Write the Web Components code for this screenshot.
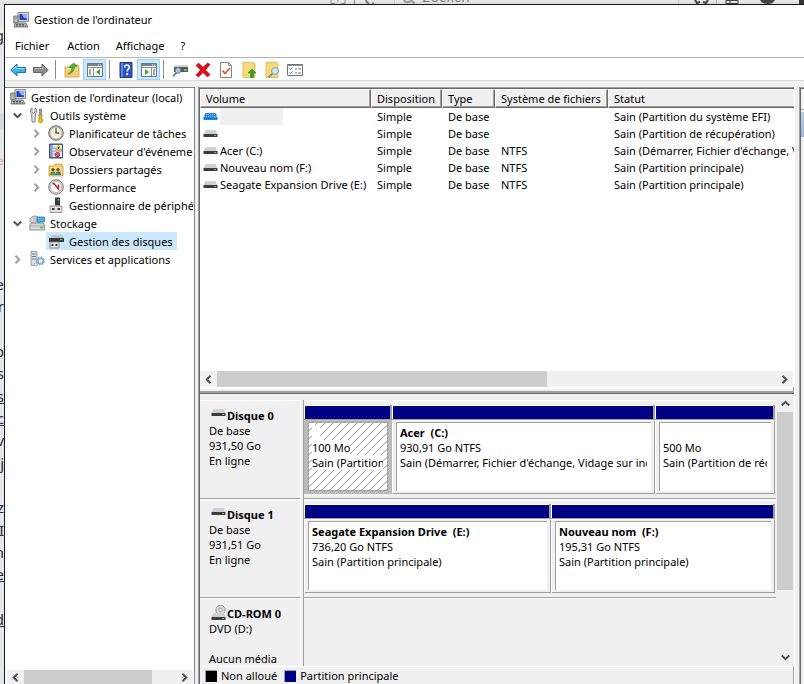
<!DOCTYPE html>
<html lang="fr">
<head>
<meta charset="utf-8">
<title>Gestion de l'ordinateur</title>
<style>
html,body{height:100%;margin:0}
body{font:11px/15px "Noto Sans","Open Sans",sans-serif;color:#000;background:#e6e7ea;overflow:hidden}
</style>
</head>
<body>
<mmc-desktop></mmc-desktop>
<script>
const define = (name, css, html) => {
  const tpl = document.createElement('template');
  customElements.define(name, class extends HTMLElement {
    connectedCallback() {
      if (this.shadowRoot) return;
      const root = this.attachShadow({mode: 'open'});
      tpl.innerHTML = `<style>*{box-sizing:border-box}:host{box-sizing:border-box}button{font:inherit;color:inherit;border:0;background:none;padding:0;margin:0}${css}</style>` +
        (typeof html === 'function' ? html(this) : html);
      root.append(tpl.content.cloneNode(true));
    }
  });
};

const monitor = `<path d="M5 .5h10.500v9H5z" fill="#d9d9d2" stroke="#8d8d88"/><path d="M6.500 2h7.500v6H6.500z" fill="#1f3fc4"/><path d="M9 2h5v4.500C11.500 6.500 9.500 5 9 2z" fill="#8fb4f5"/><path d="M.8 4H5v7H.8z" fill="#b9bdb9" stroke="#777"/><path d="M2 6h2" stroke="#3c3"/><path d="M2 11h11l2 4H1z" fill="#b5b9b9" stroke="#666" stroke-width=".8"/><path d="M3 12.500h9M3 14h10" stroke="#555" stroke-dasharray="2 1"/>`;
const drive = (y) => `<path d="M2.500 ${y}h10l2 4H.5z" fill="#d0d1d4"/><path d="M.5 ${y+4}h14v3H.5z" fill="#3a3d40"/><path d="M11 ${y+5}h2v1h-2z" fill="#3fe04a"/>`;
const folder = `<path d="M1 5h5l1-2h7v2h1v10H1z" fill="#f2cf74" stroke="#c79f3c" stroke-width=".8"/><path d="M2 7h12" stroke="#fbe7ae"/>`;
const panel = (tri, side) => `<path d="M.5 1.500h15v13H.5z" fill="#fff" stroke="#6f757b"/><path d="M1 2h14v2H1z" fill="#7b8187"/><path d="M1 5.500h14M${side ? 10.5 : 6.5} 6v8" stroke="#8b9196"/><path d="M11 3h1M13 3h1" stroke="#fff"/><path d="M${side ? 12 : 2} 8h2M${side ? 12 : 2} 10h2M${side ? 12 : 2} 12h2" stroke="#4f555b"/><path d="${tri}" fill="#3ba42f"/>`;
const icons = {
  computer: monitor,
  back: `<path d="M.7 8 7 2v3.500h8.500v5H7V14z" fill="#3fb0ea" stroke="#1b6fae"/><path d="M2.500 7.500 6 4.300V6.500h8.500" fill="none" stroke="#a3def8"/>`,
  forward: `<path d="M15.300 8 9 2v3.500H.5v5H9V14z" fill="#8d8d8d" stroke="#626262"/><path d="M1.500 6.500H10V4.300" fill="none" stroke="#bdbdbd"/>`,
  up: folder + `<path d="M4 12c2.500-1 4-3.500 4-6.500H5L9.500 1 13 4l-2.500 1C10 9 7.500 12 4 12z" fill="#47b83a" stroke="#27801f" stroke-width=".6"/>`,
  treepane: panel('M13 7v6l-4-3z', false),
  actpane: panel('M4 7v6l4-3z', true),
  help: `<path d="M2 .5h12v15H2z" fill="#2c55c5" stroke="#1d3a8d"/><path d="M3 1h2v14H3z" fill="#5f84e4"/><path d="M6.700 5.500c0-3.400 4.800-3.200 4.600-.4C11.200 7 9.200 7 9.200 9.500" fill="none" stroke="#fff" stroke-width="1.600"/><circle cx="9.200" cy="12.200" r="1.100" fill="#fff"/>`,
  connect: `<path d="M3 3h12l1 2H2z" fill="#cfd2d4"/><path d="M2 5h14v5H2z" fill="#54595e"/><path d="M12 7h3v2h-3z" fill="#35d54a"/><circle cx="6" cy="8.500" r="2.800" fill="#a5c9dc" stroke="#6c7f89"/><path d="M4.300 10.500 1 14.500" stroke="#6c7f89" stroke-width="1.800"/>`,
  remove: `<path d="M1 3.500 3.500 1 8 5.300 12.500 1 15 2.500 10.500 8l4.500 4.500-2.500 2.500L8 10.500 3.500 15 1 13l4.500-5z" fill="#d90f1c" stroke="#9d0710" stroke-width=".6"/>`,
  doccheck: `<path d="M2.500.5h8l3 3v12h-11z" fill="#fff" stroke="#858585"/><path d="M10.500.5v3h3" fill="none" stroke="#858585"/><path d="m4.500 8.500 2.500 3 5-5.500" fill="none" stroke="#e8562a" stroke-width="1.800"/>`,
  folderup: `<path d="M2 .5h11l1 1v14H2z" fill="#f9da78" stroke="#d9b14c" stroke-width=".8"/><path d="m11 7 4 4h-2.500v4.500h-3V11H7z" fill="#2fa52a" stroke="#1c7d1a" stroke-width=".5"/>`,
  foldersearch: `<path d="M2 .5h11l1 1v14H2z" fill="#f9da78" stroke="#d9b14c" stroke-width=".8"/><circle cx="11" cy="9" r="3.400" fill="#cfeaf5" stroke="#7f98a5"/><path d="m8.500 11.500-4 4" stroke="#8b8b83" stroke-width="1.800"/>`,
  list: `<path d="M.5 2.500h15v11H.5z" fill="#fff" stroke="#6f757b"/><path d="M1 3.500h14" stroke="#8b9196"/><path d="m2.500 6.500 1 1 2-2M2.500 10.500l1 1 2-2" fill="none" stroke="#2b8ae0"/><path d="M8 7h2M11 7h3M8 11h2M11 11h3" stroke="#777"/>`,
  tools: `<path d="M3 1v4l1.500 1.500L6 5V1c2 1 2.500 3.500.5 5.500L6 15H3l-.3-8.500C.8 5 1 2 3 1z" fill="#e8e8e8" stroke="#737373" stroke-width=".9"/><path d="M10.500 2h2v5.500h-2z" fill="#9a9a9a" stroke="#666" stroke-width=".6"/><path d="M9.500 8h4l-1 2 1.300 4.500c-.5 1.500-4 1.500-4.500 0L10.500 10z" fill="#f5b81c" stroke="#a8770b" stroke-width=".7"/>`,
  clock: `<circle cx="8" cy="8" r="7.300" fill="#b8b8b5" stroke="#6f6f6f"/><circle cx="8" cy="8" r="5.500" fill="#fdf1d2"/><path d="M8 3v5h3.500" fill="none" stroke="#3e5f96" stroke-width="1.300"/>`,
  events: `<path d="M1.500 1h13v14h-13z" fill="#5273a3" stroke="#384f73"/><path d="M4.500 2H14v12H4.500z" fill="#e9eff8"/><path d="M5 5h3M5 8h9M5 11h3" stroke="#7893c4"/><path d="M2 3h2M2 5h2M2 7h2M2 9h2M2 11h2M2 13h2" stroke="#dfe6f1" stroke-width=".8"/><path d="m10.500 2 3 5h-6z" fill="#f8d32a" stroke="#a98708" stroke-width=".5"/><path d="M10.500 4v2" stroke="#222"/><circle cx="9.500" cy="11.500" r="2.600" fill="#d4213a"/><path d="m8.500 10.500 2 2m0-2-2 2" stroke="#fff" stroke-width=".8"/>`,
  shared: folder + `<circle cx="5" cy="8.500" r="1.600" fill="#704824"/><circle cx="10" cy="8.500" r="1.600" fill="#704824"/><path d="M2 14c0-5 6-5 6 0z" fill="#4d9b68"/><path d="M7.500 14c0-5 5.500-5 5.500 0z" fill="#3d7a9c"/>`,
  perf: `<circle cx="8" cy="8" r="7.300" fill="#ddd" stroke="#777"/><circle cx="8" cy="8" r="5.500" fill="#fff" stroke="#a2a2a2" stroke-width=".7"/><path d="m4.500 5 1.500-.5L10.500 10V5.500" fill="none" stroke="#c91b25" stroke-width="1.500"/>`,
  device: `<path d="M7 .5h5v8H7z" fill="#36393b"/><path d="M9.500 2h1.500v1.500H9.500z" fill="#42dc4a"/><path d="M2 9h12v6.500H2z" fill="#e1e1e1" stroke="#808080" stroke-width=".8"/><path d="M4 11h2.500v2H4zM9.500 11H12v2H9.500z" fill="#333"/>`,
  storage: `<ellipse cx="6" cy="5" rx="5" ry="4" fill="#d2d5d6" stroke="#7d7d7d" stroke-width=".8"/><circle cx="6" cy="5" r="1.200" fill="#fff" stroke="#888" stroke-width=".6"/><path d="M8 2h7.500v5H8z" fill="#45b4e8" stroke="#2a6f9a" stroke-width=".7"/><path d="M2 8h12l1.500 2v5H.8v-5z" fill="#d8d9d9" stroke="#777" stroke-width=".8"/><path d="M1 11h14" stroke="#999" stroke-width=".7"/><path d="M11 12.500h3" stroke="#36c93e" stroke-width="1.500"/>`,
  diskmgmt: `<path d="M4 2h10l2 3H2z" fill="#c0c3c6"/><path d="M1 5h15v4H1z" fill="#36393c"/><path d="M12 6.500h2.500" stroke="#3ce04b" stroke-width="1.300"/><path d="M2 9h9v6H2z" fill="#ececec" stroke="#777" stroke-width=".8"/><path d="M3.500 11h2v2h-2zM7.500 11h2v2h-2z" fill="#333"/>`,
  services: `<path d="M2 .5h6v14H2z" fill="#dfe3e6" stroke="#7f8a92" stroke-width=".8"/><path d="M3 3h4M3 5.500h4M3 8h4" stroke="#6e7a84"/><circle cx="11.500" cy="10" r="2.800" fill="none" stroke="#8fb1cc" stroke-width="2"/><circle cx="11.500" cy="10" r="4" fill="none" stroke="#7b9db9" stroke-dasharray="1.500 1.600"/><circle cx="7" cy="13.500" r="1.700" fill="#dfe9f1" stroke="#7b9db9" stroke-dasharray="1.200 .7"/>`,
  drive: drive(4),
  driveblue: `<path d="M2.500 4h10l2 4v3H.5V8z" fill="#2584dc"/><path d="M3 5.500h10M1 7.500h13" stroke="#8cc6f6" stroke-dasharray="1 1"/><path d="M1 9.500h13" stroke="#1560b4" stroke-dasharray="1 1"/><path d="M11 8.500h2" stroke="#2be07a"/>`,
  cdrom: `<circle cx="9.500" cy="5" r="4.700" fill="#d6d6d6" stroke="#929292" stroke-width=".8"/><circle cx="9.500" cy="5" r="1.600" fill="#fff" stroke="#888" stroke-width=".7"/>` + drive(8)
};

define('mmc-icon', ':host{display:inline-flex;flex:none;width:16px;height:16px}svg{width:100%;height:100%}',
  h => `<svg viewBox="0 0 16 16" aria-hidden="true">${icons[h.getAttribute('name')]}</svg>`);

define('mmc-chevron', ':host{display:inline-flex;flex:none;width:9px;height:9px;color:#505050}:host([dir=right]){transform:rotate(-90deg)}:host([dir=left]){transform:rotate(90deg)}:host([dir=up]){transform:rotate(180deg)}svg{width:100%}',
  '<svg viewBox="0 0 9 9" aria-hidden="true"><path d="m.8 2.500 3.700 3.700 3.700-3.700" fill="none" stroke="currentColor" stroke-width="2"/></svg>');

/* Application visible behind the window */
define('backdrop-top', `:host{display:block;height:4px;overflow:hidden;background:linear-gradient(#ececec,#d9d9d9);color:#777;grid-column:1/-1}
  svg{width:100%;height:4px;flex:none}
  .wrap{display:grid;grid-template-columns:330px 64px 285px minmax(0,1fr);grid-template-rows:4px;align-items:end;height:4px}
  .search{display:flex;align-items:flex-end;height:20px;gap:8px;border:1px solid #c8c8c8;border-width:0 1px;padding-left:8px;font:italic 15px/16px "Open Sans",sans-serif}
  .search svg{width:12px}`,
  `<div class="wrap"><i></i>
  <svg viewBox="0 0 64 4" preserveAspectRatio="xMinYMin"><path d="M1 0v3.500h4M11 3.500h4V0M7 1h2M24.500 0v4" fill="none" stroke="#888"/><path d="M36 0c0 2 2 3 3 4M42 3.500h2" stroke="#777" stroke-width="2" fill="none"/></svg>
  <div class="search"><svg viewBox="0 0 12 4"><path d="M1 0c1 3 6 3 7 0l4 4" fill="none" stroke="#999" stroke-width="2"/></svg><span>Zoeken</span></div>
  <svg viewBox="0 0 125 4" preserveAspectRatio="xMinYMin"><path d="M16 0l2 3 3-1M29 0l-2 3-3-1" fill="none" stroke="#444" stroke-width="2"/><path d="M37.500 0v4" stroke="#aaa"/><path d="M47 0v4M51 0v4M59 0v4M47 3.500h12M47 .5h12" stroke="#444" fill="none"/><path d="M81 0h15c-2 3-4 4-7.500 4S83 3 81 0z" fill="#444"/><path d="M120 0h5v4h-5z" fill="#333"/></svg></div>`);

define('backdrop-left', `:host{display:grid;grid-template-columns:minmax(0,1fr);grid-template-rows:23px 16px 70px 16px 20px 23px 101px minmax(0,357fr) 54fr;width:4px;overflow:hidden;color:#2b2d3c;font-size:15px;line-height:20px;background:#e6e7ea}
  span{display:flex;justify-content:flex-end;white-space:pre;align-items:center;min-width:0}
  .rule{border-bottom:1px solid #bbb;background:#efefef}
  .grey{background:#d6d7da}.red{color:#d9a0a0;font-size:11px}
  .lines{display:grid;grid-template-columns:minmax(0,1fr);grid-auto-rows:minmax(0,1fr)}u{text-decoration-thickness:1px}`,
  `<span></span><span class="rule">g</span><span></span><span class="grey"></span><span></span><span class="red">e</span><span></span><div class="lines">${
    ['ge','er','','o','s','<u>s</u>','<u>c</u>','(v','j','','z','NI','n','<u>e</u>','','<u>d</u>'].map(t => `<span>${t}</span>`).join('')}</div>`);

define('mmc-titlebar', ':host{display:flex;align-items:center;gap:5px;height:29px;padding-left:8px}h1{font:inherit;margin:0}', '<mmc-icon name="computer"></mmc-icon><h1><slot></slot></h1>');

define('mmc-menubar', ':host{display:flex;align-items:center;height:24px;padding-left:2px;border-bottom:1px solid #b4b4b4}button{padding:0 8px}button:nth-child(2){padding-right:10px}',
  h => h.getAttribute('items').split(',').map(t => `<button>${t}</button>`).join(''));

define('mmc-toolbar', `:host{display:flex;align-items:center;height:23px;padding:1px 0 0 1px;border-bottom:1px solid #d9d9d9}
  button{display:flex;align-items:center;justify-content:center;width:23px;height:21px;border:1px solid transparent}
  button.on{background:#cce8ff;border-color:#99d1ff}hr{width:1px;height:19px;margin:0 4px 0 3px;border:0;background:#8d8d8d}`,
  () => ['back:Précédent','forward:Suivant','|','up:Dossier parent','*treepane:Arborescence','|','help:Aide','*actpane:Volet Actions','|','connect:Connecter','remove:Supprimer','doccheck:Propriétés','folderup:Ouvrir','foldersearch:Explorer','list:Paramètres']
    .map(t => { if (t === '|') return '<hr>'; const [n, l] = t.replace('*', '').split(':'); return `<button aria-label="${l}"${t[0] === '*' ? ' class="on"' : ''}><mmc-icon name="${n}"></mmc-icon></button>`; }).join(''));

define('mmc-scrollbar', `:host{display:grid;grid-template-columns:17px minmax(0,1fr) 17px;height:16px;background:#f0f0f0}
  :host([vertical]){grid-template-columns:none;grid-template-rows:17px minmax(0,1fr) 17px;height:auto;width:16px}
  button{display:flex;align-items:center;justify-content:center}.track{display:flex}
  :host([vertical]) .track{flex-direction:column}.thumb{background:#cdcdcd;flex:0 0 var(--thumb)}`,
  h => { const v = h.hasAttribute('vertical'); return `<button aria-label="Reculer"><mmc-chevron dir="${v ? 'up' : 'left'}"></mmc-chevron></button><div class="track"><div class="thumb"></div></div><button aria-label="Avancer"><mmc-chevron dir="${v ? 'down' : 'right'}"></mmc-chevron></button>`; });

define('mmc-node', `:host{display:flex;align-items:center;height:18px;white-space:nowrap;padding-left:calc(4px + var(--level,0)*19px)}
  .exp{width:14px;height:18px;display:flex;align-items:center;justify-content:center;flex:none}
  .exp[data-s=closed] mmc-chevron{color:#a0a0a0}
  .label{display:flex;align-items:center;height:18px;gap:5px;padding:0 4px 0 2px;margin-left:3px}
  :host([root]) .label{margin-left:-2px}
  :host([selected]) .label{background:#cce8ff}`,
  h => { const s = h.getAttribute('state'); return (h.hasAttribute('root') ? '' : s ? `<button class="exp" data-s="${s}" aria-label="Développer"><mmc-chevron dir="${s === 'open' ? 'down' : 'right'}"></mmc-chevron></button>` : '<span class="exp"></span>') + `<span class="label"><mmc-icon name="${h.getAttribute('icon')}"></mmc-icon><slot></slot></span>`; });

define('mmc-tree', `:host{display:flex;flex-direction:column;min-width:0;background:#fff;border:1px solid #828790;border-width:1px 1px 0 0;overflow:hidden;padding:0 1px}
  .nodes{flex:1;min-height:0;overflow:hidden}mmc-scrollbar{--thumb:84%;height:14px;margin-left:1px}`,
  `<div class="nodes"><slot></slot></div><mmc-scrollbar></mmc-scrollbar>`);

define('volume-list', `:host{display:flex;flex-direction:column;min-height:0;background:#fff;overflow:hidden}
  .view{flex:1;min-height:0;overflow:hidden}
  table{border-collapse:separate;border-spacing:0;table-layout:fixed;width:100%}
  th{height:19px;padding:0 4px 0 5px;text-align:left;font-weight:400;background:#f0f0f0;border-top:1px solid #fff;border-left:1px solid #fff;border-right:1px solid #696969;border-bottom:1px solid #696969;box-shadow:inset -1px -1px #a0a0a0;white-space:nowrap}
  th:last-child{border-right:0;box-shadow:inset 0 -1px #a0a0a0}
  td{height:17px;padding:0 0 0 6px;line-height:17px;white-space:nowrap;overflow:hidden}
  td:first-child{padding-left:3px}td:last-child{padding-left:6px}
  .name{display:flex;align-items:center;gap:1px}
  .mask{width:63px;height:17px;background:#f0f0f0}
  mmc-scrollbar{--thumb:59%;margin-right:1px}`,
  () => { const rows = [['driveblue','<i class="mask"></i>','','Partition du système EFI'],['drive','','','Partition de récupération'],['drive','Acer (C:)','NTFS',"Démarrer, Fichier d'échange, Vidage sur incident"],['drive','Nouveau nom (F:)','NTFS','Partition principale'],['drive','Seagate Expansion Drive (E:)','NTFS','Partition principale']];
  return `<div class="view"><table><colgroup><col style="width:171px"><col style="width:71px"><col style="width:53px"><col style="width:113px"><col></colgroup>
  <thead><tr><th>Volume</th><th>Disposition</th><th>Type</th><th>Système de fichiers</th><th>Statut</th></tr></thead><tbody>${
    rows.map(([i, n, f, s]) => `<tr><td><span class="name"><mmc-icon name="${i}"></mmc-icon>${n}</span></td><td>Simple</td><td>De base</td><td>${f}</td><td>Sain (${s})</td></tr>`).join('')}</tbody></table></div><mmc-scrollbar></mmc-scrollbar>`; });

define('disk-partition', `:host{display:flex;flex-direction:column;min-width:0;flex:var(--size) 1 0;height:89px}
  .bar{height:15px;flex:none;background:#000084;border:solid #a0a0a0;border-width:0 2px 1px 0;box-shadow:inset 1px 1px #fff}
  .frame{flex:1;min-height:0;display:flex;border:1px solid #fff;border-right-color:#a0a0a0;border-bottom-color:#a0a0a0;padding:1px 3px 2px 3px;background:#f0f0f0}
  .box{flex:1;min-width:0;padding:2px 4px 0 3px;background:#fff;border:1px solid #a0a0a0;border-width:1px 0 0 1px}
  .clip{overflow:hidden;white-space:pre;min-height:45px}
  :host([selected]) .frame{background:#bababa;border-color:#bababa}
  :host([selected]) .box{border-width:1px;background:linear-gradient(135deg,#fff 0 46%,#a0a0a0 46% 54%,#fff 54%) 0 0/8px 8px}
  b,span{display:block;width:max-content;min-height:15px}
  :host([selected]) b,:host([selected]) span{background:#fff;min-width:8px}`,
  h => `<div class="bar"></div><div class="frame"><div class="box"><div class="clip"><b>${h.getAttribute('name') || ''}</b><span>${h.getAttribute('capacity')}</span><span>${h.getAttribute('status')}</span></div></div></div>`);

define('disk-row', `:host{display:grid;grid-template-columns:101px minmax(0,1fr);gap:2px;height:99px;flex:none}
  .label{border-top:1px solid #fff;border-right:1px solid #fff;border-bottom:1px solid #a0a0a0;padding:7px 0 0 9px;white-space:nowrap}
  .head{display:flex;align-items:flex-end;height:15px}.head mmc-icon{margin-left:2px}
  :host([kind=drive]) mmc-icon{margin-bottom:2px}
  p{margin:0;min-height:15px}
  .parts{display:flex;border:solid #a0a0a0;border-width:0 0 1px 1px;box-shadow:inset 0 1px #fff;padding:5px 1px 0 0}`,
  h => `<div class="label"><div class="head"><mmc-icon name="${h.getAttribute('kind')}"></mmc-icon><b>${h.getAttribute('name')}</b></div>${h.getAttribute('info').split('|').map(t => `<p>${t}</p>`).join('')}</div><div class="parts"><slot></slot></div>`);

define('disk-view', `:host{display:flex;flex-direction:column;min-height:0;background:#f0f0f0}
  .main{flex:1;min-height:0;display:grid;grid-template-columns:minmax(0,1fr) 16px;gap:1px;padding-right:1px;overflow:hidden}
  .rows{display:flex;flex-direction:column;padding-top:6px;min-height:0;overflow:hidden}
  mmc-scrollbar{--thumb:75%;padding-top:1px}
  .legend{display:flex;align-items:center;height:18px;flex:none;border-top:1px solid #fff;border-right:1px solid #a0a0a0;padding-left:5px}
  .legend i{width:12px;height:12px;background:var(--c);border:1px solid #a0a0a0;border-width:1px 0 0 1px;margin-right:4px}.legend span{display:flex;align-items:center;margin-right:7px}`,
  `<div class="main"><div class="rows"><slot></slot></div><mmc-scrollbar vertical></mmc-scrollbar></div>
  <div class="legend"><span><i style="--c:#000"></i>Non alloué</span><span><i style="--c:#000084"></i>Partition principale</span></div>`);

define('actions-edge', `:host{display:grid;grid-template-rows:21px 2px 25px 1fr;border:1px solid #a0a0a0;border-width:1px 0 0 1px;box-shadow:inset 1px 1px #696969;padding:1px 0 0 1px;background:#f0f0f0;min-width:0}
  .head{border-bottom:1px solid #a0a0a0;background:#f5f5f5}.band{background:linear-gradient(#b9cfe8,#99b4d1)}`,
  '<div class="head"></div><i></i><div class="band"></div>');

define('mmc-window', `:host{display:flex;flex-direction:column;min-width:0;min-height:0;background:#fff;border:1px solid #16181c;border-width:1px 0 0 1px}
  .body{flex:1;min-height:0;display:grid;grid-template-columns:190px minmax(0,1fr) 5px;padding-top:6px;background:#f0f0f0}
  .result{display:grid;grid-template-rows:minmax(0,307fr) minmax(0,290fr);min-width:0;min-height:0;margin:0 4px 0 3px;border-left:1px solid #a0a0a0;border-right:1px solid #fff}
  .list{display:flex;flex-direction:column;min-height:0;border-top:1px solid #a0a0a0;border-left:1px solid #696969;border-bottom:1px solid #696969;box-shadow:inset 0 1px #696969;padding-top:1px}
  .list volume-list{flex:1}.split{height:6px;flex:none;background:#f0f0f0;border:solid #a0a0a0;border-width:0 1px 2px 0;box-shadow:inset 0 2px #fff}
  .disks{display:grid;min-height:0;border-left:1px solid #696969}`,
  `<mmc-titlebar>Gestion de l'ordinateur</mmc-titlebar><mmc-menubar items="Fichier,Action,Affichage,?"></mmc-menubar><mmc-toolbar></mmc-toolbar>
  <div class="body"><mmc-tree>
    <mmc-node root icon="computer">Gestion de l'ordinateur (local)</mmc-node>
    <mmc-node state="open" icon="tools">Outils système</mmc-node>
    <mmc-node style="--level:1" state="closed" icon="clock">Planificateur de tâches</mmc-node>
    <mmc-node style="--level:1" state="closed" icon="events">Observateur d'événements</mmc-node>
    <mmc-node style="--level:1" state="closed" icon="shared">Dossiers partagés</mmc-node>
    <mmc-node style="--level:1" state="closed" icon="perf">Performance</mmc-node>
    <mmc-node style="--level:1" icon="device">Gestionnaire de périphériques</mmc-node>
    <mmc-node state="open" icon="storage">Stockage</mmc-node>
    <mmc-node style="--level:1" selected icon="diskmgmt">Gestion des disques</mmc-node>
    <mmc-node state="closed" icon="services">Services et applications</mmc-node>
  </mmc-tree>
  <div class="result"><div class="list"><volume-list></volume-list><div class="split"></div></div>
  <div class="disks"><disk-view>
    <disk-row kind="drive" name="Disque 0" info="De base|931,50 Go|En ligne">
      <disk-partition selected style="--size:88" capacity="100 Mo" status="Sain (Partition du système EFI)"></disk-partition>
      <disk-partition style="--size:263" name="Acer  (C:)" capacity="930,91 Go NTFS" status="Sain (Démarrer, Fichier d'échange, Vidage sur incident)"></disk-partition>
      <disk-partition style="--size:120" capacity="500 Mo" status="Sain (Partition de récupération)"></disk-partition>
    </disk-row>
    <disk-row kind="drive" name="Disque 1" info="De base|931,51 Go|En ligne">
      <disk-partition style="--size:247" name="Seagate Expansion Drive  (E:)" capacity="736,20 Go NTFS" status="Sain (Partition principale)"></disk-partition>
      <disk-partition style="--size:224" name="Nouveau nom  (F:)" capacity="195,31 Go NTFS" status="Sain (Partition principale)"></disk-partition>
    </disk-row>
    <disk-row kind="cdrom" name="CD-ROM 0" info="DVD (D:)||Aucun média"></disk-row>
  </disk-view></div></div>
  <actions-edge></actions-edge></div>`);

define('mmc-desktop', ':host{display:grid;grid-template:4px minmax(0,1fr)/4px minmax(0,1fr);height:100vh;overflow:hidden}', '<backdrop-top></backdrop-top><backdrop-left></backdrop-left><mmc-window></mmc-window>');
</script>
</body>
</html>
